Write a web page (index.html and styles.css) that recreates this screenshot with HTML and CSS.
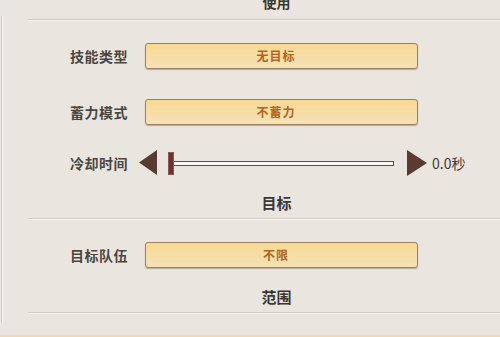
FILE: index.html
```html
<!DOCTYPE html>
<html lang="zh">
<head>
<meta charset="utf-8">
<link rel="stylesheet" href="styles.css">
</head>
<body>
<div class="page">
  <div class="rail"><div class="rail-line"></div></div>
  <div class="content">
    <div class="title title-cut"><span>使用</span></div>
    <div class="divider"></div>
    <div class="section">
      <div class="row">
        <div class="label">技能类型</div>
        <div class="select">无目标</div>
      </div>
      <div class="row row-gap1">
        <div class="label">蓄力模式</div>
        <div class="select">不蓄力</div>
      </div>
      <div class="row slider-row">
        <div class="label">冷却时间</div>
        <svg class="arrow arrow-left" width="18" height="25" viewBox="0 0 18 25"><polygon points="18,0 18,25 0,12.5" fill="#5a3b31"/></svg>
        <div class="track"><div class="thumb"></div></div>
        <svg class="arrow arrow-right" width="20" height="26" viewBox="0 0 20 26"><polygon points="0,0 0,26 20,13" fill="#5a3b31"/></svg>
        <div class="value">0.0秒</div>
      </div>
    </div>
    <div class="title">目标</div>
    <div class="divider"></div>
    <div class="section section2">
      <div class="row">
        <div class="label">目标队伍</div>
        <div class="select">不限</div>
      </div>
    </div>
    <div class="title">范围</div>
    <div class="divider"></div>
  </div>
</div>
<div class="bottom-line"></div>
</body>
</html>
```

FILE: styles.css
```css
html, body {
  margin: 0;
  padding: 0;
}
body {
  width: 500px;
  height: 337px;
  overflow: hidden;
  background: #ebe5df;
  font-family: "Noto Sans CJK SC", "Noto Sans", sans-serif;
  position: relative;
}
.page {
  display: flex;
  height: 335px;
}
.rail {
  width: 16px;
  flex: none;
  background: #e8e6e1;
}
.rail-line {
  margin-top: 16px;
  margin-left: 1px;
  width: 1px;
  height: 307px;
  background: #d2cec8;
  border-right: 1px solid #f4f2ee;
}
.content {
  flex: 1;
  padding-left: 12px;
}
.title {
  height: 18px;
  line-height: 18px;
  font-size: 15px;
  font-weight: 700;
  color: #3b3733;
  text-align: center;
  padding-left: 25px;
  box-sizing: border-box;
}
.title-cut {
  height: 19px;
  overflow: hidden;
  display: flex;
  justify-content: center;
  align-items: flex-end;
}
.title-cut span {
  display: block;
  line-height: 16px;
  font-size: 14px;
  margin-bottom: 9px;
}
.divider {
  height: 1px;
  background: #d2ccc5;
  border-bottom: 1px solid #f6f3ef;
}
.title + .divider {
  margin-top: 6px;
}
.title-cut + .divider {
  margin-top: 0;
}
.section {
  padding: 22px 0 19px;
}
.section2 {
  padding-bottom: 20px;
}
.row {
  display: flex;
  align-items: center;
  height: 26px;
}
.row-gap1 {
  margin-top: 30px;
}
.slider-row {
  margin-top: 25px;
  height: 25px;
}
.label {
  width: 100px;
  flex: none;
  text-align: right;
  font-size: 14px;
  font-weight: 700;
  letter-spacing: 0.5px;
  color: #4a4742;
  margin-right: 17px;
}
.slider-row .label {
  margin-right: 11px;
}
.select {
  width: 273px;
  height: 26px;
  box-sizing: border-box;
  border: 1px solid #9c8262;
  border-radius: 3px;
  background: linear-gradient(#f8d993, #f4e1b6);
  box-shadow: 0 1px 1px rgba(90, 60, 30, 0.35);
  text-align: center;
  padding-right: 11px;
  line-height: 24px;
  font-size: 12px;
  font-weight: 700;
  letter-spacing: 1px;
  color: #b3641f;
}
.arrow {
  flex: none;
  display: block;
}
.track {
  position: relative;
  width: 226px;
  height: 5px;
  margin-left: 11px;
  box-sizing: border-box;
  border: 1px solid #5c4c44;
  background: #fbf8f4;
  margin-top: 1px;
}
.thumb {
  position: absolute;
  left: -1px;
  top: -10px;
  width: 6px;
  height: 23px;
  box-sizing: border-box;
  background: #6a3436;
  border: 1px solid #8d5656;
}
.arrow-right {
  margin-left: 13px;
}
.value {
  margin-left: 5px;
  font-size: 14px;
  color: #3d3a36;
}
.bottom-line {
  height: 2px;
  background: #f0d9b2;
}
```
